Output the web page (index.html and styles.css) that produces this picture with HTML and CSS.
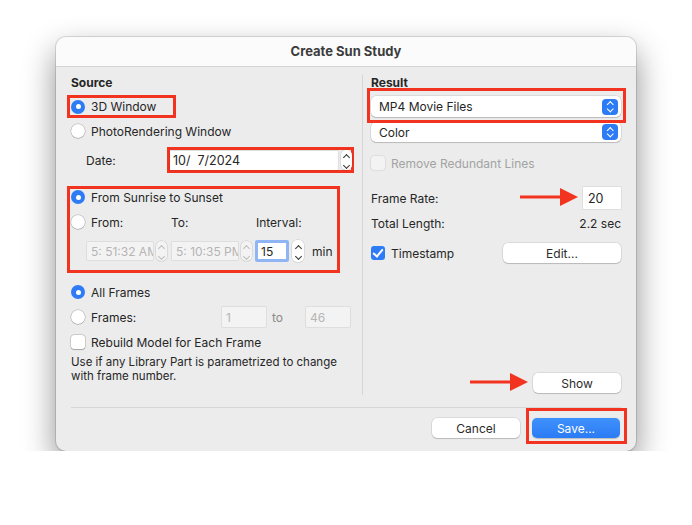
FILE: index.html
```html
<!DOCTYPE html>
<html lang="en">
<head>
    <meta charset="UTF-8">
    <title>Create Sun Study</title>
    <link rel="stylesheet" href="styles.css">
</head>
<body>
    <div class="dialog">
        <div class="titlebar">Create Sun Study</div>

        <div class="main">
            <div class="col-left">
                <div class="section-title">Source</div>

                <div class="mark mark-3d">
                    <span class="radio on"></span><span class="label">3D Window</span>
                </div>
                <div class="row row-photo">
                    <span class="radio"></span><span class="label">PhotoRendering Window</span>
                </div>

                <div class="row row-date">
                    <span class="field-label">Date:</span>
                    <div class="mark mark-date">
                        <span class="input date-input">10/&nbsp; 7/2024</span>
                        <span class="stepper"><i class="up"></i><i class="down"></i></span>
                    </div>
                </div>

                <div class="mark mark-sun">
                    <div class="row row-sunrise">
                        <span class="radio on"></span><span class="label">From Sunrise to Sunset</span>
                    </div>
                    <div class="row row-from">
                        <span class="radio"></span>
                        <span class="label col-from">From:</span>
                        <span class="col-to">To:</span>
                        <span>Interval:</span>
                    </div>
                    <div class="row row-times">
                        <span class="input disabled time">5: 51:32 AM</span>
                        <span class="stepper faint"><i class="up"></i><i class="down"></i></span>
                        <span class="input disabled time second">5: 10:35 PM</span>
                        <span class="stepper faint"><i class="up"></i><i class="down"></i></span>
                        <span class="input focused interval">15</span>
                        <span class="stepper big"><i class="up"></i><i class="down"></i></span>
                        <span class="unit">min</span>
                    </div>
                </div>

                <div class="row row-all">
                    <span class="radio on"></span><span class="label">All Frames</span>
                </div>
                <div class="row row-frames">
                    <span class="radio"></span><span class="label frames-label">Frames:</span>
                    <span class="input disabled small">1</span>
                    <span class="to">to</span>
                    <span class="input disabled small">46</span>
                </div>
                <div class="row row-rebuild">
                    <span class="check"></span><span class="label">Rebuild Model for Each Frame</span>
                </div>
                <p class="note">Use if any Library Part is parametrized to change<br>with frame number.</p>
            </div>

            <div class="col-right">
                <div class="section-title">Result</div>
                <div class="mark mark-format">
                    <div class="popup">MP4 Movie Files<span class="popup-arrows"></span></div>
                </div>
                <div class="popup popup-color">Color<span class="popup-arrows"></span></div>

                <div class="row row-remove">
                    <span class="check disabled"></span><span class="label dim">Remove Redundant Lines</span>
                </div>
                <div class="row row-rate">
                    <span>Frame Rate:</span>
                    <span class="input rate">20</span>
                </div>
                <div class="row row-length">
                    <span>Total Length:</span>
                    <span>2.2 sec</span>
                </div>
                <div class="row row-stamp">
                    <span class="check on"></span><span class="label">Timestamp</span>
                    <span class="button edit">Edit...</span>
                </div>
                <div class="row row-show">
                    <span class="button show">Show</span>
                </div>
            </div>
        </div>

        <div class="hr"></div>

        <div class="footer">
            <span class="button cancel">Cancel</span>
            <div class="mark mark-save">
                <span class="button primary">Save...</span>
            </div>
        </div>

        <svg class="arrow arrow-rate" width="60" height="22" viewBox="0 0 60 22">
            <rect x="0" y="9.5" width="42" height="3" fill="#f2331f"/>
            <polygon points="40,2 58,11 40,20" fill="#f2331f"/>
        </svg>
        <svg class="arrow arrow-show" width="60" height="22" viewBox="0 0 60 22">
            <rect x="0" y="9.5" width="42" height="3" fill="#f2331f"/>
            <polygon points="40,2 58,11 40,20" fill="#f2331f"/>
        </svg>
    </div>
</body>
</html>
```

FILE: styles.css
```css
body {
    margin: 0;
    background: #fff;
    font-family: 'Inter', 'Roboto', sans-serif;
    font-size: 12px;
    color: #262626;
}
.dialog {
    position: relative;
    width: 580px;
    height: 414px;
    margin: 37px 0 0 56px;
    background: #ececec;
    border-radius: 10px;
    box-shadow: 0 0 0 1px rgba(0, 0, 0, 0.12), 0 14px 32px rgba(0, 0, 0, 0.45);
    overflow: hidden;
}
.titlebar {
    height: 29px;
    line-height: 29px;
    background: #fbfbfb;
    border-bottom: 1px solid #d4d4d4;
    text-align: center;
    font-weight: 700;
    font-size: 13px;
    color: #3c3c3c;
}
.main {
    display: flex;
    height: 340px;
}
.col-left {
    width: 291px;
    margin: 8px 0 12px;
    padding-left: 15px;
    border-right: 1px solid #d6d6d6;
    flex: none;
}
.col-right {
    flex: 1;
    min-width: 0;
    margin-top: 8px;
    padding: 0 15px 0 8px;
}
.section-title {
    height: 15px;
    line-height: 15px;
    font-weight: 700;
}
.row {
    display: flex;
    align-items: center;
    height: 20px;
}
.label {
    margin-left: 6px;
}
.mark {
    position: relative;
    z-index: 2;
    border: 3px solid #f2331f;
    box-sizing: border-box;
    flex: none;
}

/* radios & checks */
.radio {
    width: 14px;
    height: 14px;
    border-radius: 50%;
    background: #fff;
    box-shadow: 0 0 0 0.5px rgba(0, 0, 0, 0.25), 0 0.5px 1px rgba(0, 0, 0, 0.2);
    box-sizing: border-box;
    flex: none;
}
.radio.on {
    background: #2d7cf6;
    box-shadow: none;
    display: flex;
    align-items: center;
    justify-content: center;
}
.radio.on::after {
    content: "";
    width: 5px;
    height: 5px;
    border-radius: 50%;
    background: #fff;
}
.check {
    width: 14px;
    height: 14px;
    border-radius: 3px;
    background: #fff;
    box-shadow: 0 0 0 0.5px rgba(0, 0, 0, 0.25), 0 0.5px 1px rgba(0, 0, 0, 0.2);
    flex: none;
    position: relative;
}
.check.disabled {
    background: #f3f3f3;
    box-shadow: 0 0 0 0.5px rgba(0, 0, 0, 0.12);
}
.check.on {
    background: #2d7cf6;
    box-shadow: none;
}
.check.on::after {
    content: "";
    position: absolute;
    left: 4px;
    top: 1px;
    width: 4px;
    height: 8px;
    border: solid #fff;
    border-width: 0 2px 2px 0;
    transform: rotate(40deg);
}
.dim {
    color: #a3a3a3;
}

/* inputs */
.input {
    display: flex;
    align-items: center;
    height: 20px;
    padding: 0 3px;
    background: #fff;
    box-sizing: border-box;
    box-shadow: 0 0 0 0.5px rgba(0, 0, 0, 0.12);
    white-space: nowrap;
    overflow: hidden;
    flex: none;
}
.input.disabled {
    background: #f3f3f3;
    color: #b5b5b5;
}
.stepper {
    display: flex;
    flex-direction: column;
    align-items: center;
    justify-content: center;
    width: 11px;
    height: 20px;
    margin-left: 3px;
    border-radius: 5px;
    background: #fff;
    box-shadow: 0 0 0 0.5px rgba(0, 0, 0, 0.15);
    flex: none;
}
.stepper i {
    display: block;
    width: 4px;
    height: 4px;
    border: solid #333;
    border-width: 1.3px 0 0 1.3px;
}
.stepper .up {
    transform: rotate(45deg);
    margin-top: 3px;
}
.stepper .down {
    transform: rotate(225deg);
    margin-top: 3px;
}
.stepper.faint {
    background: #f3f3f3;
}
.stepper.faint i {
    border-color: #bcbcbc;
}
.stepper.big {
    width: 12px;
    height: 22px;
}

/* source */
.mark-3d {
    display: flex;
    align-items: center;
    width: 109px;
    height: 23px;
    margin: 5px 0 0 -4px;
    padding-left: 1px;
}
.row-photo {
    margin-top: 3px;
}
.row-date {
    height: 26px;
    margin-top: 6px;
    padding-left: 15px;
}
.field-label {
    width: 81px;
    flex: none;
}
.mark-date {
    display: flex;
    align-items: center;
    width: 187px;
    height: 26px;
}
.date-input {
    width: 168px;
    height: 19px;
    font-size: 12.5px;
}
.mark-sun {
    width: 273px;
    height: 87px;
    margin: 13px 0 0 -4px;
    padding-left: 1px;
}
.row-sunrise {
    height: 16px;
}
.row-from {
    margin-top: 7px;
}
.col-from {
    width: 80px;
    flex: none;
}
.col-to {
    width: 85px;
    flex: none;
}
.row-times {
    height: 22px;
    margin-top: 8px;
    padding-left: 16px;
}
.time {
    width: 66px;
    height: 18px;
    padding-left: 4px;
}
.time.second {
    margin-left: 5px;
}
.interval {
    width: 34px;
    height: 22px;
    margin-left: 3px;
    border: 3px solid #8fb5f4;
    border-radius: 2px;
    box-shadow: none;
}
.unit {
    margin-left: 8px;
}
.row-all {
    margin-top: 9px;
}
.row-frames {
    margin-top: 5px;
}
.frames-label {
    width: 131px;
    flex: none;
}
.small {
    width: 44px;
    height: 20px;
    padding-left: 4px;
}
.to {
    width: 40px;
    padding-left: 6px;
    box-sizing: border-box;
    color: #8a8a8a;
    flex: none;
}
.row-rebuild {
    margin-top: 5px;
}
.note {
    margin: 3px 0 0;
    line-height: 14px;
    font-size: 11.5px;
}

/* result */
.popup {
    position: relative;
    display: flex;
    align-items: center;
    height: 21px;
    padding-left: 8px;
    background: #fff;
    border-radius: 5px;
    box-shadow: 0 0 0 0.5px rgba(0, 0, 0, 0.15), 0 1px 1px rgba(0, 0, 0, 0.15);
}
.popup-arrows {
    position: absolute;
    right: 3px;
    top: 2.5px;
    width: 16px;
    height: 16px;
    border-radius: 4px;
    background: #2d7cf6;
}
.popup-arrows::before,
.popup-arrows::after {
    content: "";
    position: absolute;
    left: 5.5px;
    width: 3.5px;
    height: 3.5px;
    border: solid #fff;
    border-width: 1.4px 0 0 1.4px;
}
.popup-arrows::before {
    top: 3.5px;
    transform: rotate(45deg);
}
.popup-arrows::after {
    top: 8px;
    transform: rotate(225deg);
}
.mark-format {
    width: 259px;
    height: 35px;
    margin: -2px 0 0 -4px;
    padding: 5px 2px 0 1px;
}
.popup-color {
    margin-top: -1px;
    height: 20px;
}
.popup-color .popup-arrows {
    top: 2px;
}
.row-remove {
    margin-top: 11px;
}
.row-rate {
    height: 22px;
    margin-top: 14px;
    justify-content: space-between;
}
.rate {
    width: 38px;
    height: 22px;
    padding-left: 5px;
    font-size: 12.5px;
}
.row-length {
    margin-top: 4px;
    justify-content: space-between;
}
.row-stamp {
    margin-top: 10px;
}
.row-show {
    margin-top: 110px;
    justify-content: flex-end;
}

/* buttons */
.button {
    display: flex;
    align-items: center;
    justify-content: center;
    height: 20px;
    background: #fff;
    border-radius: 5px;
    box-shadow: 0 0 0 0.5px rgba(0, 0, 0, 0.15), 0 1px 1px rgba(0, 0, 0, 0.15);
    color: #2a2a2a;
}
.edit {
    width: 118px;
    margin-left: auto;
}
.show {
    width: 88px;
}
.hr {
    height: 1px;
    margin: 0 15px;
    background: #d6d6d6;
}
.footer {
    display: flex;
    justify-content: flex-end;
    padding-right: 9px;
}
.cancel {
    width: 88px;
    margin: 10px 6px 0 0;
}
.mark-save {
    width: 101px;
    height: 36px;
    padding: 7px 0 0 3px;
}
.primary {
    width: 88px;
    background: linear-gradient(#3f91fb, #2b7bf5);
    color: #fff;
    box-shadow: 0 0.5px 1px rgba(0, 0, 0, 0.2);
}

/* annotation arrows */
.arrow {
    position: absolute;
    z-index: 3;
}
.arrow-rate {
    left: 464px;
    top: 149px;
}
.arrow-show {
    left: 414px;
    top: 334px;
}
```
